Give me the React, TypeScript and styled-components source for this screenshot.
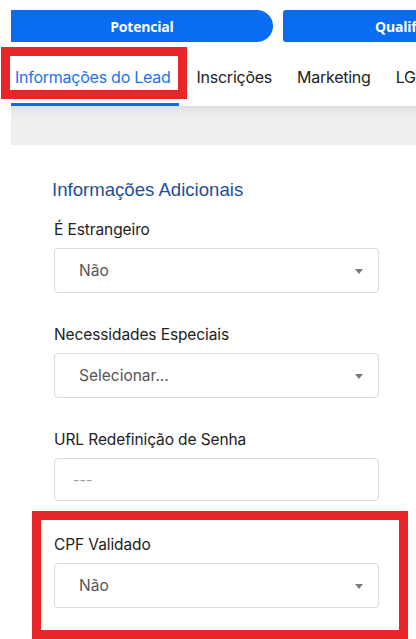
import React from "react";
import styled, { createGlobalStyle } from "styled-components";

const Global = createGlobalStyle`
  html, body { margin: 0; padding: 0; background: #fff; }
  body { font-family: Inter, "Noto Sans", Arial, sans-serif; overflow: hidden; }
  * { box-sizing: border-box; }
`;

const Page = styled.div`
  position: relative;
  width: 416px;
  height: 639px;
  overflow: hidden;
  background: #fff;
`;

const StageBar = styled.div`
  display: flex;
  gap: 10px;
  padding: 10px 0 0 11px;
  white-space: nowrap;
`;

const StageButton = styled.div<{ $first?: boolean }>`
  flex: 0 0 262px;
  height: 32px;
  background: #0a6cf2;
  color: #fff;
  font-family: "Open Sans", Arial, sans-serif;
  font-weight: 700;
  font-size: 14px;
  display: flex;
  align-items: center;
  justify-content: center;
  letter-spacing: -0.2px;
  border-radius: ${(p) => (p.$first ? "0 16px 16px 0" : "3px 0 0 3px")};
`;

const Tabs = styled.div`
  display: flex;
  align-items: flex-end;
  height: 64px;
  margin-left: 11px;
  white-space: nowrap;
`;

const Tab = styled.div<{ $active?: boolean; $pl: number; $pr: number }>`
  padding: 0 ${(p) => p.$pr}px 16px ${(p) => p.$pl}px;
  font-size: 16px;
  letter-spacing: -0.25px;
  color: ${(p) => (p.$active ? "#1a73ec" : "#222")};
  border-bottom: 3px solid ${(p) => (p.$active ? "#0a6cf2" : "transparent")};
`;

const GrayBand = styled.div`
  margin-left: 11px;
  height: 39px;
  background: linear-gradient(#dfdfe1 0px, #e9eaec 6px, #eeeff1 14px, #eeeff1 100%);
`;

const Form = styled.div`
  padding: 34px 0 0 54px;
`;

const Heading = styled.h2`
  margin: 0 0 19px -2px;
  font-family: "Liberation Sans", Arial, sans-serif;
  font-weight: 400;
  font-size: 18.6px;
  line-height: 22px;
  color: #1d4f97;
`;

const Field = styled.div<{ $gap?: number }>`
  display: flex;
  flex-direction: column;
  width: 325px;
  margin-bottom: ${(p) => p.$gap ?? 32}px;
`;

const Label = styled.label`
  font-size: 15.5px;
  line-height: 20px;
  color: #222;
  letter-spacing: -0.1px;
  margin-bottom: 8px;
`;

const Box = styled.div<{ $h: number }>`
  position: relative;
  height: ${(p) => p.$h}px;
  border: 1px solid #d9d9d9;
  border-radius: 4px;
  display: flex;
  align-items: center;
  padding-left: 24px;
  font-size: 15.5px;
  color: #555;
`;

const Placeholder = styled.span`
  color: #9a9a9a;
  font-size: 14px;
  margin-left: -6px;
`;

const Caret = styled.span`
  position: absolute;
  right: 15px;
  top: 50%;
  margin-top: -2px;
  width: 0;
  height: 0;
  border-left: 4px solid transparent;
  border-right: 4px solid transparent;
  border-top: 5px solid #7a7a7a;
`;

const Highlight = styled.div<{ $x: number; $y: number; $w: number; $h: number }>`
  position: absolute;
  left: ${(p) => p.$x}px;
  top: ${(p) => p.$y}px;
  width: ${(p) => p.$w}px;
  height: ${(p) => p.$h}px;
  border: 9px solid #e8262a;
  pointer-events: none;
`;

export default function App() {
  return (
    <Page>
      <Global />
      <StageBar>
        <StageButton $first>Potencial</StageButton>
        <StageButton>Qualificado</StageButton>
      </StageBar>
      <Tabs>
        <Tab $active $pl={4} $pr={8}>Informações do Lead</Tab>
        <Tab $pl={18} $pr={12}>Inscrições</Tab>
        <Tab $pl={13} $pr={12}>Marketing</Tab>
        <Tab $pl={13} $pr={12}>LGPD</Tab>
      </Tabs>
      <GrayBand />
      <Form>
        <Heading>Informações Adicionais</Heading>
        <Field>
          <Label>É Estrangeiro</Label>
          <Box $h={45}>
            Não
            <Caret />
          </Box>
        </Field>
        <Field>
          <Label>Necessidades Especiais</Label>
          <Box $h={45}>
            Selecionar...
            <Caret />
          </Box>
        </Field>
        <Field $gap={34}>
          <Label>URL Redefinição de Senha</Label>
          <Box $h={43}>
            <Placeholder>---</Placeholder>
          </Box>
        </Field>
        <Field>
          <Label>CPF Validado</Label>
          <Box $h={45}>
            Não
            <Caret />
          </Box>
        </Field>
      </Form>
      <Highlight $x={1} $y={47} $w={186} $h={52} />
      <Highlight $x={32} $y={511} $w={376} $h={128} />
    </Page>
  );
}
